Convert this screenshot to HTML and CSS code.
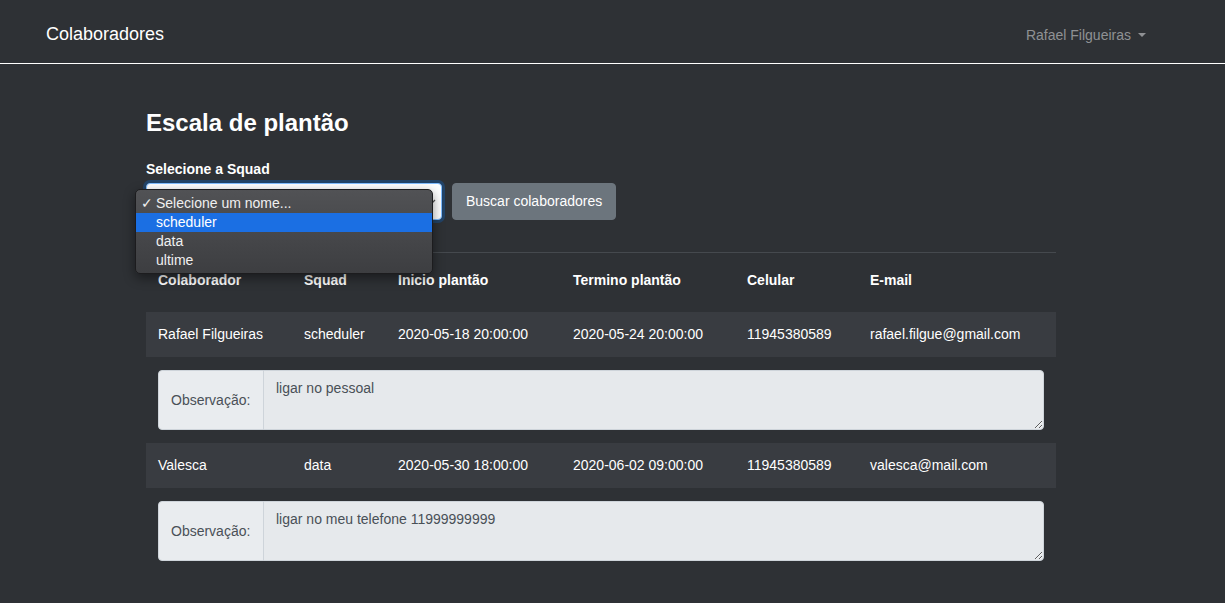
FILE: index.html
```html
<!DOCTYPE html>
<html lang="pt-BR">
<head>
<meta charset="utf-8">
<title>Colaboradores</title>
<link rel="stylesheet" href="styles.css">
</head>
<body>
<nav class="navbar">
  <a class="brand" href="#">Colaboradores</a>
  <a class="user-toggle" href="#">Rafael Filgueiras<span class="caret"></span></a>
</nav>
<main class="content">
  <h4 class="title">Escala de plantão</h4>
  <label class="field-label" for="squad">Selecione a Squad</label>
  <div class="search-row">
    <div class="select-wrap">
      <select id="squad" class="squad-select">
        <option>Selecione um nome...</option>
        <option>scheduler</option>
        <option>data</option>
        <option>ultime</option>
      </select>
      <ul class="popup">
        <li class="popup-item"><span class="check">✓</span>Selecione um nome...</li>
        <li class="popup-item active">scheduler</li>
        <li class="popup-item">data</li>
        <li class="popup-item">ultime</li>
      </ul>
    </div>
    <button class="btn-search" type="button">Buscar colaboradores</button>
  </div>
  <table class="shifts">
    <thead>
      <tr>
        <th class="c-name">Colaborador</th>
        <th class="c-squad">Squad</th>
        <th class="c-start">Inicio plantão</th>
        <th class="c-end">Termino plantão</th>
        <th class="c-phone">Celular</th>
        <th class="c-mail">E-mail</th>
      </tr>
    </thead>
    <tbody>
      <tr class="data-row">
        <td>Rafael Filgueiras</td>
        <td>scheduler</td>
        <td>2020-05-18 20:00:00</td>
        <td>2020-05-24 20:00:00</td>
        <td>11945380589</td>
        <td>rafael.filgue@gmail.com</td>
      </tr>
      <tr class="note-row">
        <td colspan="6">
          <div class="input-group">
            <span class="prepend">Observação:</span>
            <textarea class="note" readonly>ligar no pessoal</textarea>
          </div>
        </td>
      </tr>
      <tr class="data-row">
        <td>Valesca</td>
        <td>data</td>
        <td>2020-05-30 18:00:00</td>
        <td>2020-06-02 09:00:00</td>
        <td>11945380589</td>
        <td>valesca@mail.com</td>
      </tr>
      <tr class="note-row">
        <td colspan="6">
          <div class="input-group">
            <span class="prepend">Observação:</span>
            <textarea class="note" readonly>ligar no meu telefone 11999999999</textarea>
          </div>
        </td>
      </tr>
    </tbody>
  </table>
</main>
</body>
</html>
```
FILE: styles.css
```css
* { box-sizing: border-box; }
html, body { margin: 0; padding: 0; }
body {
  background: #2e3135;
  color: #fff;
  font-family: "Liberation Sans", Arial, Helvetica, sans-serif;
  font-size: 14px;
  line-height: 21px;
  height: 603px;
  overflow: hidden;
}
.navbar {
  display: flex;
  justify-content: space-between;
  align-items: center;
  height: 64px;
  padding: 0 79px 0 46px;
  border-bottom: 1px solid #ffffff;
}
.brand {
  color: #fff;
  text-decoration: none;
  font-size: 18px;
  line-height: 24px;
  margin-top: 5px;
}
.user-toggle {
  color: #8f9194;
  text-decoration: none;
  font-size: 14px;
  display: flex;
  align-items: center;
  margin-top: 7px;
}
.caret {
  display: inline-block;
  margin-left: 7px;
  width: 0;
  height: 0;
  border-top: 4px solid #8f9194;
  border-left: 4px solid transparent;
  border-right: 4px solid transparent;
}
.content {
  width: 910px;
  margin-left: 146px;
  padding-top: 44px;
}
.title {
  margin: 0;
  font-size: 24px;
  line-height: 29px;
  font-weight: bold;
}
.field-label {
  display: block;
  margin-top: 22px;
  font-weight: bold;
  line-height: 21px;
}
.search-row {
  display: flex;
  gap: 10px;
  margin-top: 3px;
}
.select-wrap {
  position: relative;
  width: 296px;
}
.squad-select {
  -webkit-appearance: none;
  appearance: none;
  width: 296px;
  height: 37px;
  border: 1px solid #80bdff;
  border-radius: 4px;
  background: #fff url("data:image/svg+xml;utf8,<svg xmlns='http://www.w3.org/2000/svg' width='10' height='6'><path d='M1 1l4 4 4-4' fill='none' stroke='%23555' stroke-width='1.3'/></svg>") no-repeat right 5px center;
  box-shadow: 0 0 0 3px rgba(0,123,255,.25);
  font: inherit;
  color: #495057;
  padding: 0 12px;
  outline: none;
}
.popup {
  position: absolute;
  left: -11px;
  top: 6px;
  width: 298px;
  height: 85px;
  margin: 0;
  padding: 4px 0 0;
  list-style: none;
  background: linear-gradient(#515255, #3d3e41);
  border: 1px solid #1c1c1e;
  border-radius: 5px;
  box-shadow: 0 4px 12px rgba(0,0,0,.45);
  font-size: 14px;
  line-height: 19px;
  color: #f0f0f0;
}
.popup-item {
  position: relative;
  padding-left: 20px;
  height: 19px;
}
.popup-item.active {
  background: #1b6fe3;
  color: #fff;
}
.check {
  position: absolute;
  left: 5px;
  top: 0;
  font-size: 14px;
}
.btn-search {
  height: 37px;
  padding: 0 13px;
  border: 1px solid #6c757d;
  border-radius: 4px;
  background: #6c757d;
  color: #fff;
  font: inherit;
  line-height: 21px;
}
.shifts {
  width: 910px;
  margin-top: 32px;
  border-collapse: collapse;
  table-layout: fixed;
  border-top: 1px solid #45494e;
}
.shifts th {
  text-align: left;
  font-weight: bold;
  padding: 17px 12px 21px;
}
.c-name { width: 146px; }
.c-squad { width: 94px; }
.c-start { width: 175px; }
.c-end { width: 174px; }
.c-phone { width: 123px; }
.c-mail { width: 198px; }
.data-row td {
  padding: 12px;
  background: #393c41;
  white-space: nowrap;
}
.note-row td {
  padding: 13px 12px;
}
.input-group {
  display: flex;
  height: 60px;
}
.prepend {
  display: flex;
  align-items: center;
  width: 106px;
  padding: 0 12px;
  background: #e9ecef;
  color: #495057;
  border: 1px solid #ced4da;
  border-radius: 4px 0 0 4px;
}
.note {
  flex: 1;
  height: 60px;
  margin: 0;
  margin-left: -1px;
  padding: 7px 12px 6px;
  background: #e6e9ec;
  color: #495057;
  border: 1px solid #ced4da;
  border-radius: 0 4px 4px 0;
  font: inherit;
  line-height: 21px;
  outline: none;
}
```
